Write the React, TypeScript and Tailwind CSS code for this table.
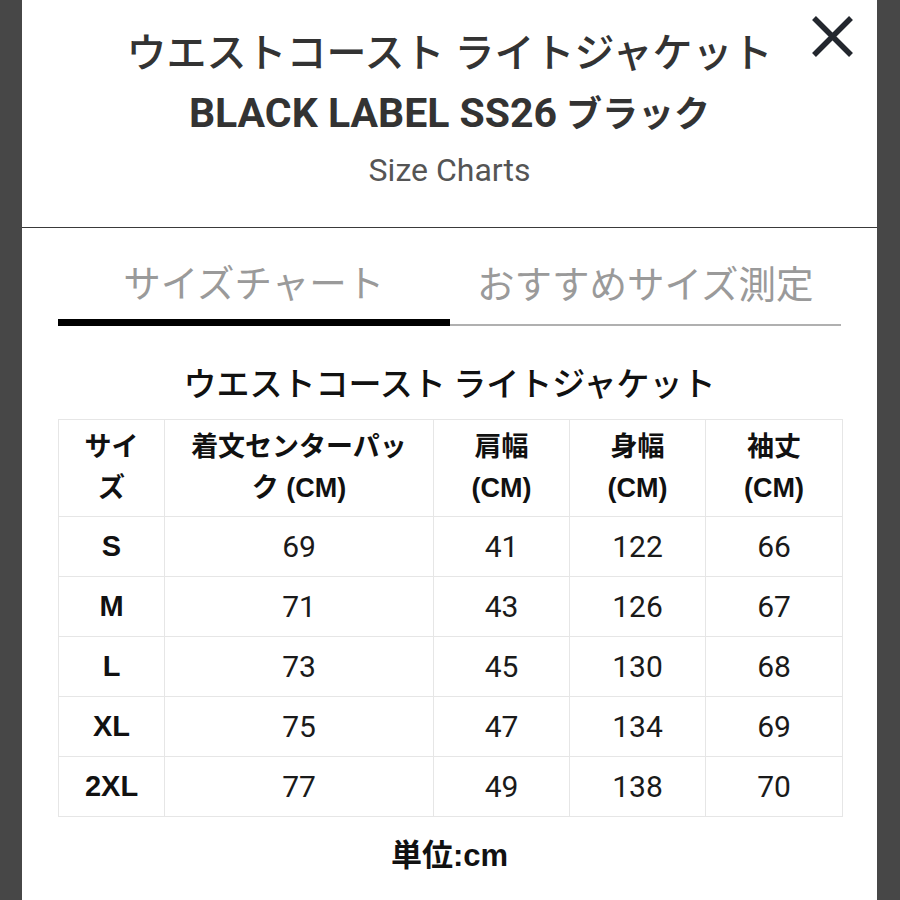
import React from "react";

const rows = [
  ["S", "69", "41", "122", "66"],
  ["M", "71", "43", "126", "67"],
  ["L", "73", "45", "130", "68"],
  ["XL", "75", "47", "134", "69"],
  ["2XL", "77", "49", "138", "70"],
];

export default function App() {
  return (
    <div className="w-[900px] h-[900px] bg-[#474747] flex overflow-hidden">
      <div className="ml-[22px] w-[855px] h-full bg-white flex flex-col">
        <div className="relative h-[228px] border-b-[1.5px] border-[#3a3a3a] pt-[24px] text-center font-['Roboto','Noto_Sans_CJK_JP',sans-serif] text-[#333]">
          <div className="leading-[60px] text-[40px] font-medium">ウエストコースト ライトジャケット</div>
          <div className="leading-[58px] text-[36px] font-bold">
            <span className="text-[41px]">BLACK LABEL SS26</span> ブラック
          </div>
          <div className="leading-[52px] text-[32px] text-[#555]">Size Charts</div>
          <button className="absolute right-[24px] top-[16px] w-[41px] h-[41px]" aria-label="close">
            <svg viewBox="0 0 41 41" className="w-[41px] h-[41px]">
              <path d="M2 2 L39 39 M39 2 L2 39" stroke="#23272e" strokeWidth="5.5" fill="none" />
            </svg>
          </button>
        </div>

        <div className="flex items-end px-[36px] font-['Noto_Sans_CJK_JP',sans-serif] text-[37.5px] text-[#9a9a9a]">
          <div className="flex-1 flex flex-col">
            <div className="h-[91px] pt-[15px] flex items-center justify-center">サイズチャート</div>
            <div className="h-[7px] bg-black"></div>
          </div>
          <div className="flex-1 flex flex-col">
            <div className="h-[95px] pt-[11px] flex items-center justify-center">おすすめサイズ測定</div>
            <div className="h-[2px] bg-[#b0b0b0]"></div>
          </div>
        </div>

        <div className="mt-[31px] leading-[50px] text-center text-[33px] font-medium text-[#111] font-['Noto_Sans_CJK_JP',sans-serif]">
          ウエストコースト ライトジャケット
        </div>

        <div className="mt-[12px] px-[36px]">
          <table className="w-[784px] border-collapse table-fixed">
            <colgroup>
              <col className="w-[106px]" />
              <col className="w-[269px]" />
              <col className="w-[136px]" />
              <col className="w-[136px]" />
              <col className="w-[137px]" />
            </colgroup>
            <thead>
              <tr className="h-[97px]">
                {[
                  ["サイ", "ズ"],
                  ["着文センターパッ", "ク (CM)"],
                  ["肩幅", "(CM)"],
                  ["身幅", "(CM)"],
                  ["袖丈", "(CM)"],
                ].map((h, i) => (
                  <th
                    key={i}
                    className="border-[1.5px] border-[#e6e6e6] text-center align-middle font-bold text-[27px] leading-[41px] text-[#111] font-['Liberation_Sans','Noto_Sans_CJK_JP',sans-serif]"
                  >
                    <div>{h[0]}</div>
                    <div>{h[1]}</div>
                  </th>
                ))}
              </tr>
            </thead>
            <tbody>
              {rows.map((r) => (
                <tr key={r[0]} className="h-[60px]">
                  {r.map((c, j) => (
                    <td
                      key={j}
                      className={
                        j === 0
                          ? "border-[1.5px] border-[#e6e6e6] text-center align-middle font-bold text-[29px] text-[#111] font-['Liberation_Sans',sans-serif]"
                          : "border-[1.5px] border-[#e6e6e6] text-center align-middle text-[30px] text-[#1a1a1a] font-['Roboto',sans-serif]"
                      }
                    >
                      {c}
                    </td>
                  ))}
                </tr>
              ))}
            </tbody>
          </table>
        </div>

        <div className="mt-[19px] leading-[40px] text-center font-bold text-[31px] text-[#111] font-['Liberation_Sans','Noto_Sans_CJK_JP',sans-serif]">
          単位:cm
        </div>
      </div>
    </div>
  );
}
